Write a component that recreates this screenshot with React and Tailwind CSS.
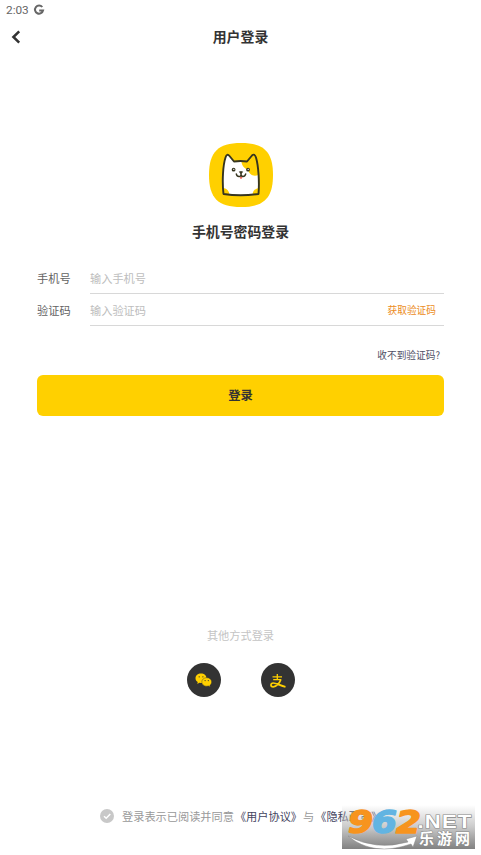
function CatLogo() {
  return (
    <svg viewBox="0 0 64 64" className="h-16 w-16">
      <path
        d="M32 0C55 0 64 9 64 32S55 64 32 64 0 55 0 32 9 0 32 0Z"
        fill="#ffd000"
      />
      <path
        d="M14.500 51C13 38 14 22 16.500 14.500Q18 10 20.500 13L25 18.500Q31.500 17.500 38 18.500L43 12.500Q45.500 10 47 14.500C49.500 23 50.500 39 49.500 51Q31.500 53.500 14.500 51Z"
        fill="#fff"
      />
      <path
        d="M32.500 18L38 18.500L43 12.500Q45.500 10 47 14.500Q49 22 49.500 32C43.500 34 40.500 31 39 27C34.500 25 32.500 22 32.500 18Z"
        fill="#ffd000"
      />
      <path d="M14.500 45Q20 46 20.500 51.800L14.500 51ZM49.500 45Q44 46 43.500 51.800L49.500 51Z" fill="#ffd000" />
      <path
        d="M14.500 51C13 38 14 22 16.500 14.500Q18 10 20.500 13L25 18.500Q31.500 17.500 38 18.500L43 12.500Q45.500 10 47 14.500C49.500 23 50.500 39 49.500 51Q31.500 53.500 14.500 51Z"
        fill="none"
        stroke="#36351f"
        strokeWidth="1.900"
        strokeLinejoin="round"
      />
      <circle cx="24.600" cy="26.700" r="1.900" fill="#36351f" />
      <circle cx="39" cy="26.700" r="1.900" fill="#36351f" />
      <circle cx="24.800" cy="26.400" r=".6" fill="#fff" />
      <circle cx="39.200" cy="26.400" r=".6" fill="#fff" />
      <path d="M30.500 28.800H33.500L32 30.600Z" fill="#36351f" stroke="#36351f" strokeLinejoin="round" />
      <path d="M30.500 33.500H33.500Q33 36 32 36T30.500 33.500Z" fill="#f06a5d" />
      <path
        d="M27.300 31Q27.800 33.500 30 33.500T32 31V30M32 31Q32 33.500 34 33.500T36.700 31"
        fill="none"
        stroke="#36351f"
        strokeWidth="1.400"
        strokeLinecap="round"
      />
    </svg>
  );
}

function GoogleIcon() {
  return (
    <svg viewBox="0 0 12 12" className="h-3 w-3" fill="none" stroke="#666" strokeWidth="2">
      <path d="M9.300 3A4.100 4.100 0 1 0 10.100 6.400H6.200" />
    </svg>
  );
}

function WechatIcon() {
  return (
    <svg viewBox="0 0 17 14" className="h-3.5 w-[17px]">
      <path d="M6 .5C9.200 .5 11.500 2.500 11.500 5.200S9 10 6 10L4.400 9.800L2.300 11L2.700 9C1.300 8.200 .5 6.800 .5 5.200C.5 2.500 2.900 .5 6 .5Z" fill="#ffd000" />
      <path
        d="M11.700 4.700C14.500 4.700 16.600 6.600 16.600 8.900C16.600 10.300 15.900 11.400 14.900 12.200L15.200 13.700L13.400 12.900L11.700 13.200C8.900 13.200 6.800 11.300 6.800 8.900S8.900 4.700 11.700 4.700Z"
        fill="#ffd000"
        stroke="#333"
        strokeWidth=".4"
      />
      <g fill="#333">
        <circle cx="4.200" cy="3.800" r=".65" />
        <circle cx="7.900" cy="3.800" r=".65" />
        <circle cx="10.100" cy="7.600" r=".6" />
        <circle cx="13.300" cy="7.600" r=".6" />
      </g>
    </svg>
  );
}

function AlipayIcon() {
  return (
    <svg viewBox="0 0 16 14" className="mt-px h-3.5 w-4" fill="none" stroke="#ffd000" strokeWidth="1.300">
      <path d="M2.500 2.800H12M7.300 0V5.600M3.200 5.600H11.200" />
      <path d="M10.800 5.400C9.600 9 6.500 12.800 3.200 12.800C.3 12.800 .1 9 3.300 9C6.500 9 10 11.600 15.500 12.900" strokeWidth="1.700" />
    </svg>
  );
}

function Field({ label, placeholder, children }) {
  return (
    <div className="flex h-8 text-[11.2px]">
      <span className="w-[53px] pt-2 leading-4 text-[#626262]">{label}</span>
      <div className="flex flex-1 justify-between border-b border-[#d8d8d8] pt-2 leading-4">
        <span className="text-[#bdbdbd]">{placeholder}</span>
        {children}
      </div>
    </div>
  );
}

function Watermark() {
  return (
    <div className="absolute top-[805px] left-[342px] h-11 w-[133px] bg-linear-to-b from-transparent via-[#bdbdbd]/80 to-[#818181]">
      <svg viewBox="0 0 133 44" className="h-full w-full overflow-visible">
        <g
          fontFamily="DejaVu Sans, sans-serif"
          fontWeight="700"
          fontStyle="italic"
          fontSize="32"
          strokeWidth="1.500"
          strokeLinejoin="round"
        >
          <text x="6" y="27.500" textLength="25" lengthAdjust="spacingAndGlyphs" fill="#f7941e" stroke="#f7941e">9</text>
          <text x="30" y="27.500" textLength="25" lengthAdjust="spacingAndGlyphs" fill="#62b4e2" stroke="#62b4e2">6</text>
          <text x="54" y="27.500" textLength="25" lengthAdjust="spacingAndGlyphs" fill="#f7941e" stroke="#f7941e">2</text>
        </g>
        <text
          x="75.500"
          y="22.500"
          textLength="55"
          lengthAdjust="spacingAndGlyphs"
          fontFamily="Liberation Sans, sans-serif"
          fontWeight="700"
          fontSize="18.500"
          letterSpacing="1"
          fill="#fff"
          stroke="#888"
          strokeWidth="1.200"
          paintOrder="stroke"
        >
          .NET
        </text>
        <path d="M6 31Q34 46 66 37L64 34L75 31L71 42L69 39Q31 52 6 31Z" fill="#fff" stroke="#888" strokeWidth=".5" />
        <text
          x="77"
          y="39"
          textLength="51"
          fontFamily="Noto Sans CJK SC, sans-serif"
          fontWeight="700"
          fontSize="15"
          fill="#fff"
          stroke="#888"
          strokeWidth="1"
          paintOrder="stroke"
        >
          乐游网
        </text>
      </svg>
    </div>
  );
}

export default function App() {
  return (
    <main className="relative flex h-[855px] w-[481px] flex-col overflow-hidden bg-white font-['Noto_Sans_CJK_SC',sans-serif] text-[#333]">
      <div className="flex h-5 items-center gap-1 pl-[6px]">
        <span className="pt-px font-[Roboto,sans-serif] text-[11.8px] text-[#666]">2:03</span>
        <GoogleIcon />
      </div>

      <header className="grid h-8 grid-cols-[40px_1fr_40px] items-center">
        <svg viewBox="0 0 10 14" className="mt-0.5 ml-[11px] h-3.5 w-2.5" fill="none" stroke="#333" strokeWidth="2.500">
          <path d="M8.200 1.300L2.400 7L8.200 12.700" />
        </svg>
        <h1 className="text-center text-[13.9px] leading-5 font-bold">用户登录</h1>
      </header>

      <section className="flex flex-col items-center pt-[91px]">
        <CatLogo />
        <h2 className="mt-[14px] text-[13.9px] leading-5 font-bold">手机号密码登录</h2>
      </section>

      <form className="flex flex-col pt-[21px] pr-[37px] pl-[37px]">
        <Field label="手机号" placeholder="输入手机号" />
        <Field label="验证码" placeholder="输入验证码">
          <span className="pr-2 text-[9.7px] text-[#ec8c22]">获取验证码</span>
        </Field>
        <a className="mt-[21px] self-end pr-[4px] text-[9.7px] leading-4 text-[#505066]">收不到验证码?</a>
        <button type="button" className="mt-3 h-[41px] rounded-md bg-[#ffd000] text-[12.3px] font-bold">
          登录
        </button>
      </form>

      <section className="mt-[211px] flex flex-col items-center">
        <p className="text-[11.2px] leading-4 text-[#c4c4c4]">其他方式登录</p>
        <div className="mt-5 flex gap-10">
          <span className="flex h-[34px] w-[34px] items-center justify-center rounded-full bg-[#333]">
            <WechatIcon />
          </span>
          <span className="flex h-[34px] w-[34px] items-center justify-center rounded-full bg-[#333]">
            <AlipayIcon />
          </span>
        </div>
      </section>

      <footer className="mt-[111px] flex items-center pl-[100px] text-[11.2px] leading-4 whitespace-nowrap text-[#999]">
        <svg viewBox="0 0 14 14" className="mr-2 h-3.5 w-3.5">
          <circle cx="7" cy="7" r="7" fill="#c8c8c8" />
          <path d="M4 7.200L6.200 9.300L10.300 5" fill="none" stroke="#fff" strokeWidth="1.500" />
        </svg>
        <span>登录表示已阅读并同意</span>
        <span className="ml-px text-[#44445e]">《用户协议》</span>
        <span className="ml-px">与</span>
        <span className="ml-px text-[#44445e]">《隐私政策》</span>
      </footer>

      <Watermark />
    </main>
  );
}
